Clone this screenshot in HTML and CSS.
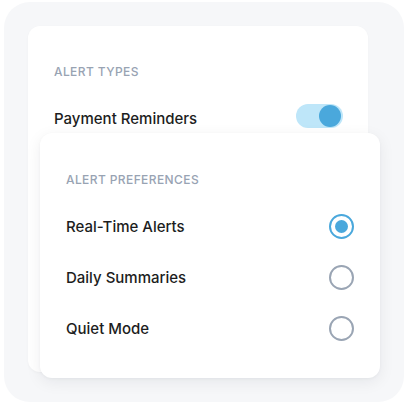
FILE: index.html
```html
<!DOCTYPE html>
<html>
<head>
<meta charset="utf-8">
<link rel="stylesheet" href="styles.css">
</head>
<body>
<div class="frame">
  <div class="stack">
    <section class="card card-back">
      <h3 class="label">Alert Types</h3>
      <div class="row">
        <span class="row-text">Payment Reminders</span>
        <span class="toggle"><span class="knob"></span></span>
      </div>
    </section>
    <section class="card card-front">
      <h3 class="label">Alert Preferences</h3>
      <div class="row">
        <span class="row-text">Real-Time Alerts</span>
        <span class="radio checked"></span>
      </div>
      <div class="row">
        <span class="row-text">Daily Summaries</span>
        <span class="radio"></span>
      </div>
      <div class="row">
        <span class="row-text">Quiet Mode</span>
        <span class="radio"></span>
      </div>
    </section>
  </div>
</div>
</body>
</html>
```
FILE: styles.css
```css
* { box-sizing: border-box; }
html, body { margin: 0; padding: 0; background: #ffffff; }
body { font-family: Inter, "Noto Sans", sans-serif; }

.frame {
  margin: 2px 0 0 4px;
  width: 400px;
  height: 400px;
  padding: 24px;
  background: #f6f7f9;
  border-radius: 26px;
}

.stack {
  display: grid;
  grid-template-columns: 1fr;
  grid-template-rows: auto;
}

.card {
  grid-area: 1 / 1;
  background: #ffffff;
  border-radius: 12px;
}

.card-back {
  margin-right: 12px;
  height: 346px;
  padding: 38px 25px 0 26px;
  box-shadow: 0 1px 3px rgba(15, 23, 42, 0.03);
}

.card-front {
  margin-left: 12px;
  margin-top: 107px;
  padding: 39px 26px 24.5px 26px;
  box-shadow: 0 4px 16px rgba(15, 23, 42, 0.07), 0 1px 3px rgba(15, 23, 42, 0.04);
}

.label {
  margin: 0 0 12.5px 0;
  font-size: 12px;
  line-height: 16px;
  font-weight: 500;
  text-transform: uppercase;
  letter-spacing: 0.4px;
  color: #98a3b3;
}

.row {
  height: 51px;
  display: flex;
  align-items: center;
  justify-content: space-between;
}

.row-text {
  font-size: 15px;
  font-weight: 500;
  color: #1c1d21;
}

.toggle {
  width: 47px;
  height: 24px;
  border-radius: 12px;
  background: #bee6f9;
  display: flex;
  align-items: center;
  justify-content: flex-end;
  padding: 0 2px;
  margin-top: -4px;
}

.knob {
  width: 22px;
  height: 22px;
  border-radius: 50%;
  background: #4aa8dc;
}

.radio {
  width: 25px;
  height: 25px;
  border-radius: 50%;
  border: 2px solid #9aa5b4;
  display: flex;
  align-items: center;
  justify-content: center;
}

.radio.checked {
  border-color: #4aa8dc;
}

.radio.checked::after {
  content: "";
  width: 13px;
  height: 13px;
  border-radius: 50%;
  background: #4aa8dc;
}
```
